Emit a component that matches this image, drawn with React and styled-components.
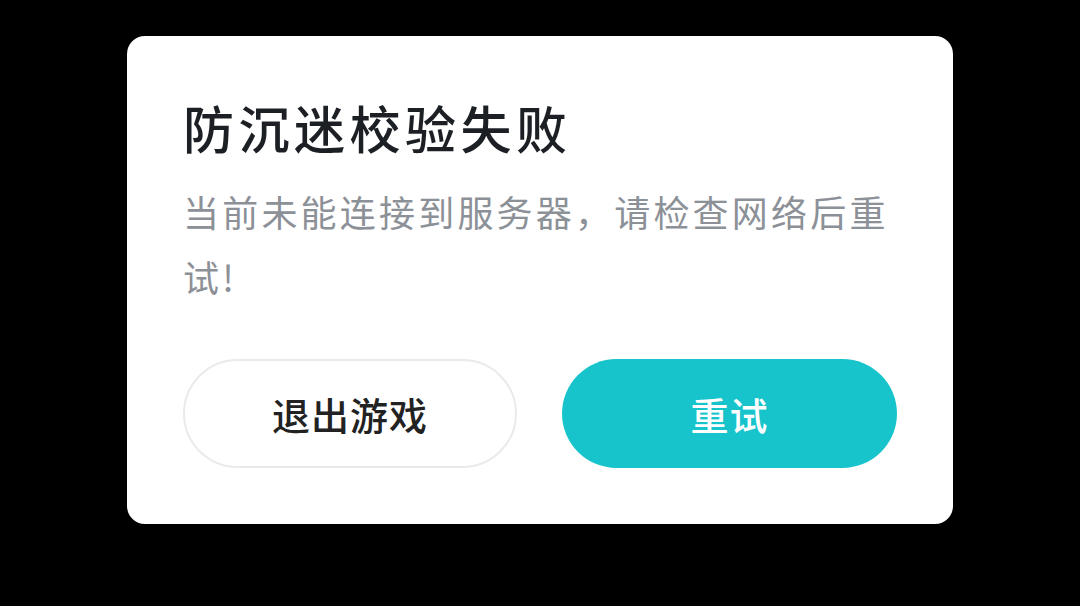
import styled, { createGlobalStyle } from "styled-components";

const GlobalStyle = createGlobalStyle`
  html, body {
    margin: 0;
    padding: 0;
    background: #000;
  }
  body {
    font-family: "Noto Sans CJK SC", "Noto Sans", sans-serif;
  }
`;

const Screen = styled.div`
  width: 1080px;
  height: 606px;
  background: #000;
  display: flex;
  justify-content: center;
  align-items: flex-start;
  padding-top: 36px;
  box-sizing: border-box;
`;

const Dialog = styled.div`
  width: 826px;
  box-sizing: border-box;
  background: #fff;
  border-radius: 18px;
  padding: 51px 56px 56px;
  display: flex;
  flex-direction: column;
`;

const Title = styled.h1`
  margin: 0;
  font-size: 51px;
  line-height: 80px;
  font-weight: 500;
  letter-spacing: 4.5px;
  color: #1c1f24;
`;

const Message = styled.p`
  margin: 12px 0 0;
  font-size: 36px;
  line-height: 65px;
  letter-spacing: 3.2px;
  color: #8c9097;
`;

const Actions = styled.div`
  display: grid;
  grid-template-columns: 334px 335px;
  justify-content: space-between;
  margin-top: 50px;
`;

const Button = styled.button`
  height: 109px;
  border-radius: 55px;
  box-sizing: border-box;
  font-family: inherit;
  font-size: 38px;
  font-weight: 500;
  letter-spacing: 1px;
  cursor: pointer;
  border: ${(p) => (p.$primary ? "none" : "2px solid #e9eaec")};
  background: ${(p) => (p.$primary ? "#17c4cc" : "#fff")};
  color: ${(p) => (p.$primary ? "#fff" : "#222")};
`;

export default function App() {
  return (
    <>
      <GlobalStyle />
      <Screen>
        <Dialog>
          <Title>防沉迷校验失败</Title>
          <Message>当前未能连接到服务器，请检查网络后重试!</Message>
          <Actions>
            <Button>退出游戏</Button>
            <Button $primary>重试</Button>
          </Actions>
        </Dialog>
      </Screen>
    </>
  );
}
